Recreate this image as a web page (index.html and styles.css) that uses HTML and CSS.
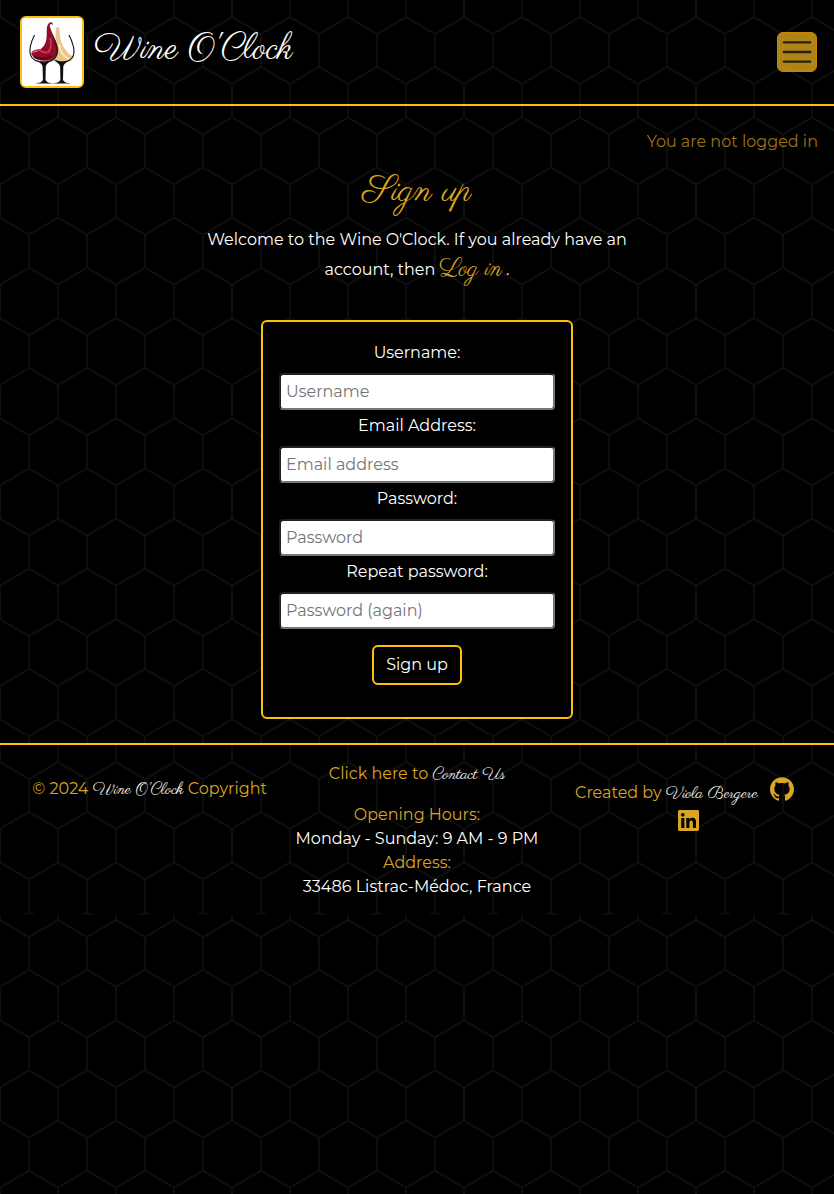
FILE: index.html
```html
<!DOCTYPE html>
<html lang="en">
<head>
<meta charset="utf-8">
<meta name="viewport" content="width=device-width, initial-scale=1">
<title>Wine O'Clock - Sign up</title>
<link rel="stylesheet" href="styles.css">
</head>
<body>
<header class="site-header">
  <a class="brand" href="#">
    <svg class="brand-logo" viewBox="0 0 60 68" aria-hidden="true">
      <rect width="60" height="68" fill="#fff"/>
      <path d="M34 11c1-3.500 3.500-3 3.500 1 .5 9 1.800 15 7 21 3 4 5.500 5.500 8 5.500-2 4-6 5.500-10.500 5.500-4 0-7.500-1-9-4 3-3 3.500-7 2.500-12-1-6-3-9-1.500-17z" fill="#ecc58b"/>
      <path d="M37 26c1 8 5 13 10 15" fill="none" stroke="#fbe6c0" stroke-width="2"/>
      <path d="M30.500 7.500c-.8-2.500-3.500-1.500-2.500 1.500 1 4 3 7 5 12 3 7 4.300 11 2.500 15.500-2 4.500-6 6.300-11.500 6.300-6.500 0-12.500-1.500-15-7.500 8-1.500 12-5 14.500-10.500 2-5 .8-11 1.500-15.500 1-6.500 7-6.500 5.500-1.800z" fill="#8f0d26"/>
      <path d="M10 34.500c4-3 8-3 10-1s7 1 8-1M28 20c1.500 4 1 10-1 13" fill="none" stroke="#cf3150" stroke-width="2"/>
      <path d="M12 39c5 2 12 3 17-1" fill="none" stroke="#570719" stroke-width="2"/>
      <path d="M12.500 17c-4 8-5.500 15-4 20C10 41.500 15.500 44 22 44s11-2.500 12.500-6.500c1.400-5-.3-12-2.500-17M47 17c4 8 6 15 4.500 20C50 41.500 45.500 44 40 44c-2.500 0-5-.7-7-2" fill="none" stroke="#222" stroke-width="1.200"/>
      <path d="M13.500 42q8.500 3.500 17 0-6 3-6.700 6.500l-.3 13.500q1.200 3 7.900 3.500H12.500q7.500-.5 8.400-3.500l-.3-13.500q-.7-3.500-7.100-6.500zM31 42q8.500 3.500 17 0-6 3-6.700 6.500l-.3 13.500q1.200 3 7.900 3.500H30q7.500-.5 8.400-3.500l-.3-13.500q-.7-3.500-7.100-6.500z" fill="#111"/>
    </svg>
    <span class="brand-name">Wine O'Clock</span>
  </a>
  <button class="menu-button" type="button" aria-label="Toggle navigation">
    <svg viewBox="0 0 30 30" aria-hidden="true"><path d="M4 7h22M4 15h22M4 23h22" fill="none" stroke="#000" stroke-opacity=".75" stroke-width="2" stroke-linecap="round"/></svg>
  </button>
</header>

<main class="page">
  <p class="login-status">You are not logged in</p>
  <h1 class="title">Sign up</h1>
  <p class="intro">Welcome to the Wine O'Clock. If you already have an account, then <a class="script-link" href="#">Log in</a> .</p>
  <form class="card">
    <label for="username">Username:</label>
    <input class="field" id="username" type="text" placeholder="Username">
    <label for="email">Email Address:</label>
    <input class="field" id="email" type="email" placeholder="Email address">
    <label for="password1">Password:</label>
    <input class="field" id="password1" type="password" placeholder="Password">
    <label for="password2">Repeat password:</label>
    <input class="field" id="password2" type="password" placeholder="Password (again)">
    <button class="submit" type="submit">Sign up</button>
  </form>
</main>

<footer class="site-footer">
  <p class="copyright">© 2024 <span class="script">Wine O'Clock</span> Copyright</p>
  <div class="info">
    <p class="contact">Click here to <a class="script" href="#">Contact Us</a></p>
    <p>Opening Hours:<br><span class="plain">Monday - Sunday: 9 AM - 9 PM</span></p>
    <p>Address:<br><span class="plain">33486 Listrac-Médoc, France</span></p>
  </div>
  <div class="credits">
    <span class="author">Created by <span class="script">Viola Bergere</span></span>
    <a class="social" href="#" aria-label="GitHub">
      <svg class="github" viewBox="0 0 24 24" aria-hidden="true"><path fill="currentColor" d="M12 .297c-6.630 0-12 5.373-12 12 0 5.303 3.438 9.800 8.205 11.385.6.113.82-.258.82-.577 0-.285-.01-1.040-.015-2.040-3.338.724-4.042-1.610-4.042-1.610C4.422 18.070 3.633 17.700 3.633 17.700c-1.087-.744.084-.729.084-.729 1.205.084 1.838 1.236 1.838 1.236 1.070 1.835 2.809 1.305 3.495.998.108-.776.417-1.305.76-1.605-2.665-.3-5.466-1.332-5.466-5.930 0-1.310.465-2.380 1.235-3.220-.135-.303-.54-1.523.105-3.176 0 0 1.005-.322 3.300 1.230.96-.267 1.980-.399 3-.405 1.020.006 2.040.138 3 .405 2.280-1.552 3.285-1.230 3.285-1.230.645 1.653.24 2.873.12 3.176.765.84 1.230 1.910 1.230 3.220 0 4.610-2.805 5.625-5.475 5.920.42.36.81 1.096.81 2.220 0 1.606-.015 2.896-.015 3.286 0 .315.21.69.825.57C20.565 22.092 24 17.592 24 12.297c0-6.627-5.373-12-12-12"/></svg>
    </a>
    <a class="social social-linkedin" href="#" aria-label="LinkedIn">
      <svg class="linkedin" viewBox="0 32 448 448" aria-hidden="true"><path fill="currentColor" d="M416 32H31.900C14.300 32 0 46.500 0 64.300v383.400C0 465.500 14.300 480 31.900 480H416c17.600 0 32-14.500 32-32.300V64.300c0-17.800-14.400-32.300-32-32.300zM135.400 416H69V202.200h66.500V416zm-33.200-243c-21.300 0-38.500-17.300-38.500-38.500S80.900 96 102.200 96c21.200 0 38.500 17.300 38.500 38.500 0 21.300-17.200 38.500-38.500 38.500zm282.100 243h-66.400V312c0-24.800-.5-56.700-34.500-56.700-34.600 0-39.900 27-39.900 54.900V416h-66.400V202.200h63.700v29.200h.9c8.900-16.800 30.600-34.500 62.900-34.500 67.200 0 79.700 44.300 79.700 101.900V416z"/></svg>
    </a>
  </div>
</footer>
</body>
</html>
```
FILE: styles.css
```css
:root {
  --gold: #daa520;
  --line: #ffc107;
  --sans: Montserrat, Inter, sans-serif;
  --cursive: Parisienne, "Liberation Serif", cursive;
  --honeycomb: url("data:image/svg+xml,%3Csvg xmlns='http://www.w3.org/2000/svg' width='58' height='301' viewBox='0 0 58 301'%3E%3Cdefs%3E%3Cpath id='h' d='M0-17V17L29 34 58 17V-17M29 34V67M0 84 29 67 58 84M0 84V118M58 84V118'/%3E%3C/defs%3E%3Cg fill='none' stroke='%230e0e0e' stroke-width='2'%3E%3Cuse href='%23h'/%3E%3Cuse href='%23h' y='100.3'/%3E%3Cuse href='%23h' y='200.7'/%3E%3C/g%3E%3C/svg%3E");
}

* { box-sizing: border-box; }

body {
  margin: 0;
  background: #000 var(--honeycomb);
  color: #fff;
  font: 16px/24px var(--sans);
}

p, h1 { margin: 0; }
a { color: inherit; text-decoration: none; }

.site-header {
  display: flex;
  align-items: center;
  justify-content: space-between;
  padding: 16px 17px 16px 20px;
  border-bottom: 2px solid var(--line);
}

.brand { display: flex; align-items: center; gap: 10px; }

.brand-logo {
  width: 64px;
  height: 72px;
  border: 2px solid var(--line);
  border-radius: 6px;
  background: #fff;
}

.brand-name {
  padding-bottom: 4px;
  font: 35px/48px var(--cursive);
}

.menu-button {
  width: 40px;
  height: 40px;
  padding: 1px;
  border: 1px solid #ffa500;
  border-radius: 6px;
  background: var(--gold);
  opacity: .8;
}

.menu-button svg { display: block; width: 36px; height: 36px; }

.page {
  display: flex;
  flex-direction: column;
  align-items: center;
  padding: 24px 16px;
  text-align: center;
}

.login-status { align-self: flex-end; color: var(--gold); opacity: .7; }

.title {
  margin-top: 14px;
  color: var(--gold);
  font: 35px/48px var(--cursive);
}

.intro { max-width: 440px; margin-top: 9px; line-height: 30px; }
.script-link { color: var(--gold); font: 24px/24px var(--cursive); }

.card {
  display: flex;
  flex-direction: column;
  align-items: center;
  width: 312px;
  max-width: 100%;
  margin-top: 35px;
  padding: 19px 16px 32px;
  border: 2px solid var(--line);
  border-radius: 6px;
  background: #000;
}

.field {
  width: 100%;
  height: 37px;
  margin: 8px 0 4px;
  padding: 0 5px;
  border: 2px inset #767676;
  border-radius: 4px;
  background: #fff;
  color: #212529;
  font: 16px/24px var(--sans);
}

.field::placeholder { color: #757575; }

.submit {
  margin-top: 12px;
  padding: 6px 12px;
  border: 2px solid var(--line);
  border-radius: 6px;
  background: #000;
  color: #fff;
  font: 16px/24px var(--sans);
}

.site-footer {
  display: grid;
  grid-template-columns: repeat(3, 1fr);
  padding: 17px 16px 16px;
  border-top: 2px solid var(--line);
  background: #000 var(--honeycomb);
  color: var(--gold);
  text-align: center;
}

.copyright { margin-top: 15px; }
.script { color: #fff; font: 16px/24px var(--cursive); }
.plain { color: #fff; }
.contact { margin-bottom: 16px; }

.credits {
  display: flex;
  flex-wrap: wrap;
  justify-content: center;
  align-content: flex-start;
  column-gap: 12px;
  padding: 12px 16px 0;
}

.author { padding-top: 7px; }
.social { display: flex; align-items: center; height: 29px; color: var(--gold); }
.social-linkedin { margin-left: 8px; }
.github { width: 24px; height: 24px; }
.linkedin { width: 21px; height: 21px; }
```
